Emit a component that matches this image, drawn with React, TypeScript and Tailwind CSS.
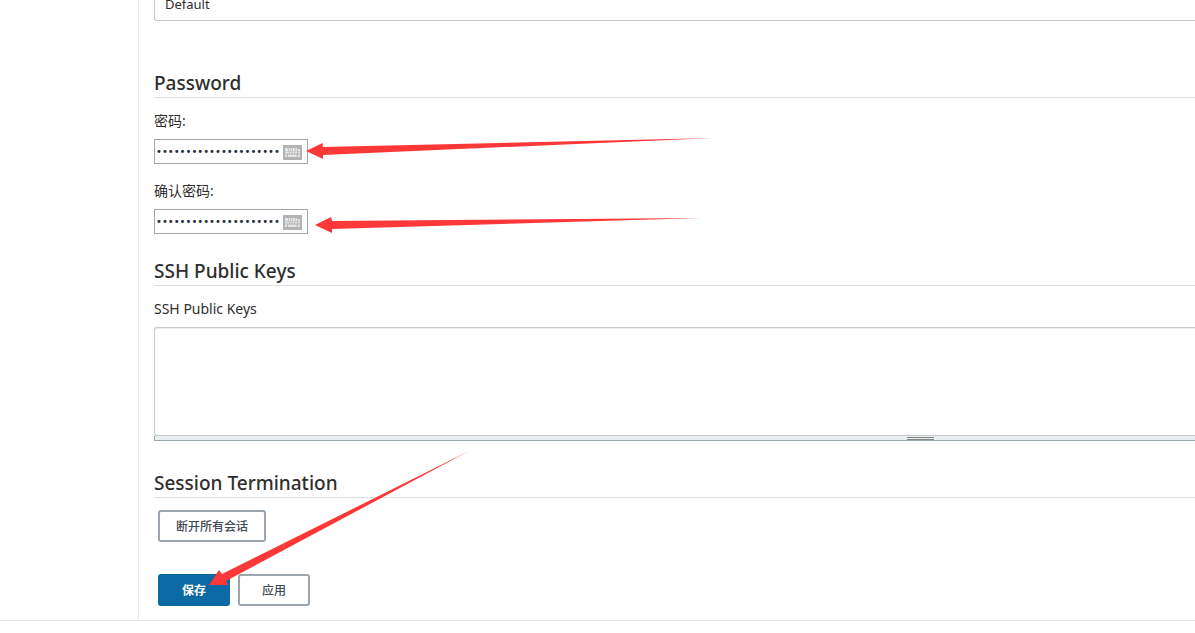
import type { ReactNode } from "react";

const MASKED = "correcthorsebattery21";

function Section({ title, children }: { title: string; children: ReactNode }) {
  return (
    <section>
      <h2 className="border-b border-[#dcdfe0] text-[19px] leading-7 font-medium text-[#2e2e2e]">
        {title}
      </h2>
      {children}
    </section>
  );
}

function KeyboardIcon() {
  return (
    <svg
      width="19"
      height="15"
      viewBox="0 0 19 15"
      className="pointer-events-none absolute top-[6px] right-[6px]"
      aria-hidden="true"
    >
      <rect width="19" height="15" rx="0.5" fill="#b3b3b3" />
      <path
        d="M2 3h3v3H2zM5.6 3h1.8v3H5.6zM8 3h1.4v3H8zM10 3h2v3h-2zM12.6 3h1.4v3h-1.4zM14.8 4h2.2v2h-2.2zM2 6.6h4v2H2zM6.6 6.6h2v2h-2zM9.4 6.6h2v2h-2zM12 6.6h2v2h-2zM14.8 6.6h2.2v2h-2.2zM2 9.6h2v2.4H2zM5 9.6h8.6v2.4H5zM14.6 9.6h2.4v2.4h-2.4z"
        fill="#e6e6e6"
      />
    </svg>
  );
}

function PasswordField({ id, label }: { id: string; label: string }) {
  return (
    <div className="flex flex-col items-start">
      <label htmlFor={id} className="text-[14px] leading-5">
        {label}
      </label>
      <div className="relative mt-2">
        <input
          id={id}
          type="password"
          defaultValue={MASKED}
          className="block h-[25px] w-[154px] border border-[#a6a6a6] bg-white pr-6 pl-px font-['DejaVu_Sans',sans-serif] text-[10px] text-[#1d2b3d] outline-none"
        />
        <KeyboardIcon />
      </div>
    </div>
  );
}

function OutlineButton({ children }: { children: ReactNode }) {
  return (
    <button
      type="button"
      className="h-8 min-w-[72px] rounded-[3px] border-2 border-[#9aa5af] bg-white px-4 pt-[2px] text-[12px] font-medium text-[#414a54]"
    >
      {children}
    </button>
  );
}

function Arrows() {
  return (
    <svg
      width="720"
      height="600"
      viewBox="0 0 720 600"
      className="pointer-events-none absolute top-0 left-0"
      fill="#fc3838"
      aria-hidden="true"
    >
      <path d="M306 151L322.500 143L323 147L714 138L323 155L323 159Z" />
      <path d="M315 225L331 217L332 221L701 218L332 229L332 233Z" />
      <path d="M209 585L219 570L222 574L469 451L226 581L228 585Z" />
    </svg>
  );
}

export default function App() {
  return (
    <div className="relative overflow-hidden bg-white font-['Noto_Sans','Noto_Sans_CJK_SC',sans-serif] text-[13px] text-[#2e2e2e]">
      <div className="flex border-b border-[#e4e7e8]">
        <aside className="w-[138px] shrink-0" />
        <main className="min-w-0 grow border-l border-[#e8ebec] pb-[14px] pl-[15px]">
          <select
            aria-label="Shell"
            className="-mt-[15px] block h-9 w-full appearance-none rounded-[3px] rounded-r-none border border-r-0 border-[#c6c9cb] bg-white px-[10px] pt-1 text-[13px]"
          >
            <option>Default</option>
          </select>

          <form className="flex flex-col pt-12" onSubmit={(e) => e.preventDefault()}>
            <Section title="Password">
              <div className="flex flex-col gap-[17px] pt-[13px]">
                <PasswordField id="password" label="密码:" />
                <PasswordField id="confirm" label="确认密码:" />
              </div>
            </Section>

            <div className="pt-[23px]">
              <Section title="SSH Public Keys">
                <label htmlFor="keys" className="mt-[13px] block text-[14px] leading-5">
                  SSH Public Keys
                </label>
                <textarea
                  id="keys"
                  className="mt-2 block h-[109px] w-full resize-none rounded-l-[3px] border border-r-0 border-[#c6c9cb] bg-white p-2 shadow-[inset_0_1px_0_#eeeeee] outline-none"
                />
                <div className="flex h-[5px] justify-end border-b border-l border-[#98a5ad] bg-[#e9eef0] pr-[261px]">
                  <span className="mt-px w-[27px] border-y border-[#858585]" />
                </div>
              </Section>
            </div>

            <div className="pt-7">
              <Section title="Session Termination">
                <div className="px-1 pt-3">
                  <OutlineButton>断开所有会话</OutlineButton>
                </div>
              </Section>
            </div>

            <div className="flex gap-2 px-1 pt-8">
              <button
                type="submit"
                className="h-8 w-[72px] rounded-[3px] bg-[#0b69a3] pt-[2px] text-[12px] font-bold text-white"
              >
                保存
              </button>
              <OutlineButton>应用</OutlineButton>
            </div>
          </form>
        </main>
      </div>
      <Arrows />
    </div>
  );
}
